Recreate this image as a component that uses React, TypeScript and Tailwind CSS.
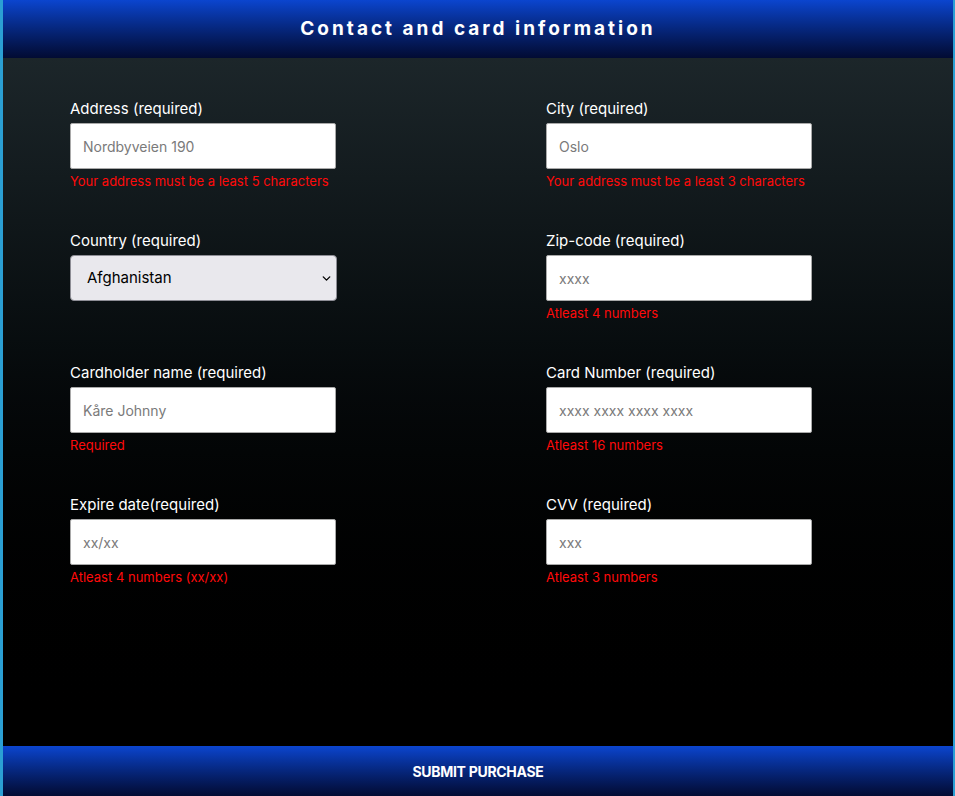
import { ChevronDown } from 'lucide-react'

type Field = {
  label: string
  placeholder?: string
  error?: string
  select?: boolean
}

const FIELDS: Field[] = [
  { label: 'Address (required)', placeholder: 'Nordbyveien 190', error: 'Your address must be a least 5 characters' },
  { label: 'City (required)', placeholder: 'Oslo', error: 'Your address must be a least 3 characters' },
  { label: 'Country (required)', select: true },
  { label: 'Zip-code (required)', placeholder: 'xxxx', error: 'Atleast 4 numbers' },
  { label: 'Cardholder name (required)', placeholder: 'Kåre Johnny', error: 'Required' },
  { label: 'Card Number (required)', placeholder: 'xxxx xxxx xxxx xxxx', error: 'Atleast 16 numbers' },
  { label: 'Expire date(required)', placeholder: 'xx/xx', error: 'Atleast 4 numbers (xx/xx)' },
  { label: 'CVV (required)', placeholder: 'xxx', error: 'Atleast 3 numbers' },
]

function FormField({ field }: { field: Field }) {
  return (
    <div className="flex flex-col">
      <label className="text-[15px] leading-[22px] text-white">{field.label}</label>
      {field.select ? (
        <div className="relative mt-[3px] w-[267px]">
          <select className="h-[46px] w-full appearance-none rounded-[4px] border border-[#8d8d95] bg-[#e9e8ed] pl-4 text-[15px] text-black outline-none">
            <option>Afghanistan</option>
          </select>
          <ChevronDown
            size={13}
            strokeWidth={2.5}
            className="pointer-events-none absolute right-[4px] top-[17px] text-black"
          />
        </div>
      ) : (
        <input
          type="text"
          placeholder={field.placeholder}
          className="mt-[3px] h-[46px] w-[266px] rounded-[2px] border border-[#a9a9a9] bg-white pl-3 text-[14px] text-black outline-none placeholder:text-[#7a7a7a]"
        />
      )}
      <p className="mt-[3px] min-h-[18px] text-[13px] leading-[18px] text-[#ff0a0a]">{field.error}</p>
    </div>
  )
}

export default function App() {
  return (
    <div
      className="flex h-[796px] w-[955px] flex-col border-l-[3px] border-r-[2px] border-[#2b9fd3]"
      style={{ fontFamily: 'Inter, "Liberation Sans", sans-serif' }}
    >
      {/* Header */}
      <header className="flex h-[58px] items-center justify-center bg-gradient-to-b from-[#0b45cf] to-[#020b33]">
        <h1 className="text-[19px] font-bold tracking-[3px] text-white">Contact and card information</h1>
      </header>

      {/* Form */}
      <main className="flex-1 bg-gradient-to-b from-[#1c262a] to-[#000000] pt-[40px]">
        <div className="grid grid-cols-2 gap-y-[40px]">
          {FIELDS.map((f, i) => (
            <div key={f.label} className={i % 2 === 0 ? 'pl-[67px]' : 'pl-[68px]'}>
              <FormField field={f} />
            </div>
          ))}
        </div>
      </main>

      {/* Submit */}
      <button className="flex h-[50px] items-center justify-center bg-gradient-to-b from-[#0b45cf] to-[#020b33] text-[14px] font-bold tracking-[-0.3px] text-white">
        SUBMIT PURCHASE
      </button>
    </div>
  )
}
